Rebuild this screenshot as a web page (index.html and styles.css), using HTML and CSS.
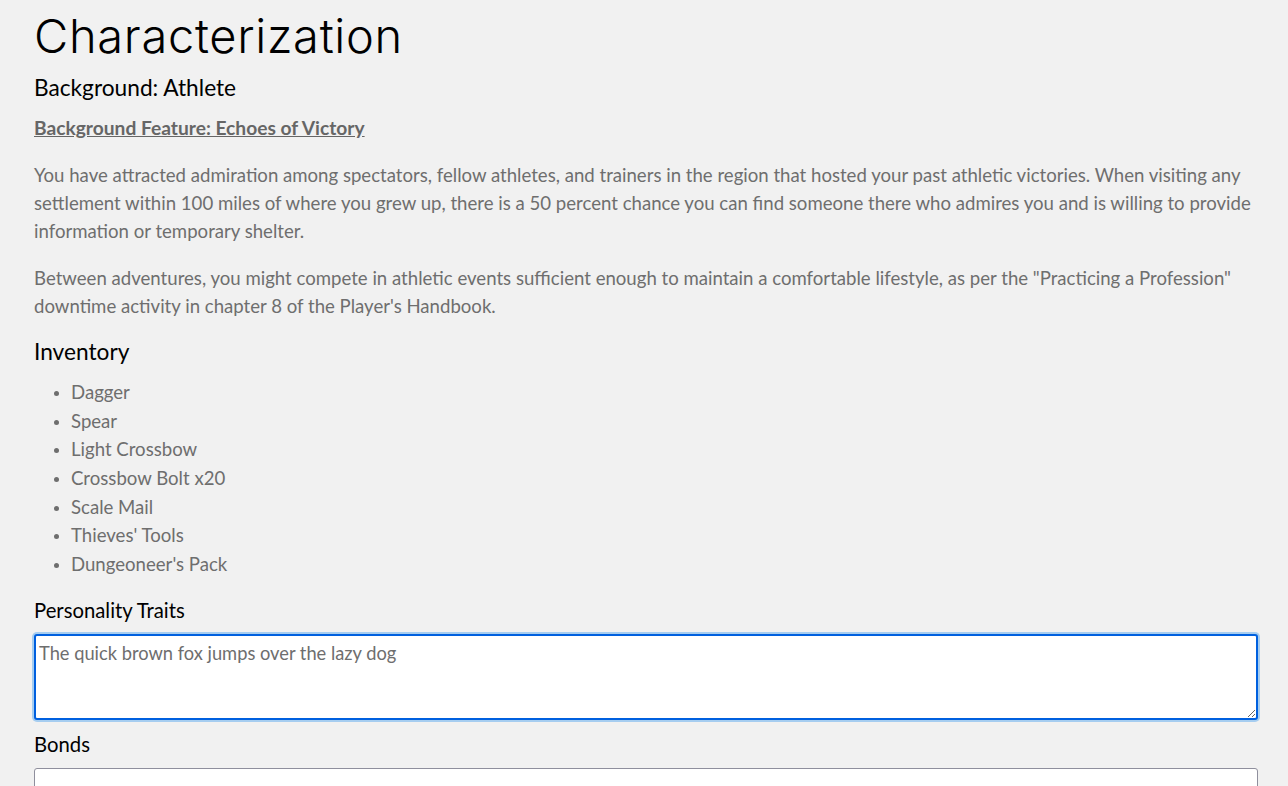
FILE: index.html
```html
<!DOCTYPE html>
<html lang="en">
<head>
<meta charset="utf-8">
<title>Characterization</title>
<link rel="stylesheet" href="styles.css">
</head>
<body>
<main class="page">
  <h1 class="title">Characterization</h1>
  <h2 class="subhead">Background: Athlete</h2>
  <a class="feature" href="#">Background Feature: Echoes of Victory</a>
  <p class="text">You have attracted admiration among spectators, fellow athletes, and trainers in the region that hosted your past athletic victories. When visiting any settlement within 100 miles of where you grew up, there is a 50 percent chance you can find someone there who admires you and is willing to provide information or temporary shelter.</p>
  <p class="text">Between adventures, you might compete in athletic events sufficient enough to maintain a comfortable lifestyle, as per the "Practicing a Profession" downtime activity in chapter 8 of the Player's Handbook.</p>
  <h2 class="subhead inv">Inventory</h2>
  <ul class="items">
    <li>Dagger</li>
    <li>Spear</li>
    <li>Light Crossbow</li>
    <li>Crossbow Bolt x20</li>
    <li>Scale Mail</li>
    <li>Thieves' Tools</li>
    <li>Dungeoneer's Pack</li>
  </ul>
  <label class="label" for="traits">Personality Traits</label>
  <textarea id="traits" class="field focus">The quick brown fox jumps over the lazy dog</textarea>
  <label class="label" for="bonds">Bonds</label>
  <textarea id="bonds" class="field"></textarea>
</main>
</body>
</html>
```
FILE: styles.css
```css
html, body {
  margin: 0;
  padding: 0;
  background: #f1f1f1;
}
body {
  font-family: Lato, "Liberation Sans", sans-serif;
  color: #6e6e6e;
  overflow: hidden;
  height: 786px;
}
.page {
  padding: 0 30px 0 34px;
  display: flex;
  flex-direction: column;
  align-items: flex-start;
}
.title {
  font-family: Inter, "Open Sans", sans-serif;
  font-weight: 300;
  font-size: 47px;
  letter-spacing: 0.7px;
  color: #000;
  margin: 10px 0 0;
  line-height: 52px;
}
.subhead {
  font-family: Lato, sans-serif;
  font-weight: 400;
  font-size: 22.7px;
  color: #000;
  margin: 11px 0 0;
  line-height: 30px;
}
.feature {
  margin-top: 14px;
  font-size: 19.2px;
  font-weight: 700;
  color: #666;
  text-decoration: underline;
  line-height: 22px;
}
.text {
  font-size: 18.6px;
  line-height: 28px;
  margin: 22px 0 0;
}
.text + .text {
  margin-top: 19px;
}
.inv {
  margin-top: 17px;
}
.items {
  margin: 11px 0 0;
  padding-left: 37px;
  font-size: 18.6px;
  line-height: 28.67px;
}
.items li::marker {
  font-size: 15px;
}
.label {
  color: #000;
  font-size: 20.3px;
  line-height: 24px;
  margin-top: 19px;
}
.field {
  box-sizing: border-box;
  align-self: stretch;
  margin-top: 12px;
  height: 86px;
  border: 1px solid #8f8f9d;
  border-radius: 3px;
  background: #fff;
  font-family: Lato, sans-serif;
  font-size: 18.3px;
  color: #6e6e6e;
  padding: 6px 3px;
  resize: vertical;
}
.field.focus {
  border: 2px solid #0060df;
  box-shadow: 0 0 0 2px #a6cdf0;
  outline: none;
}
.field.focus + .label {
  margin-top: 12px;
}
```
